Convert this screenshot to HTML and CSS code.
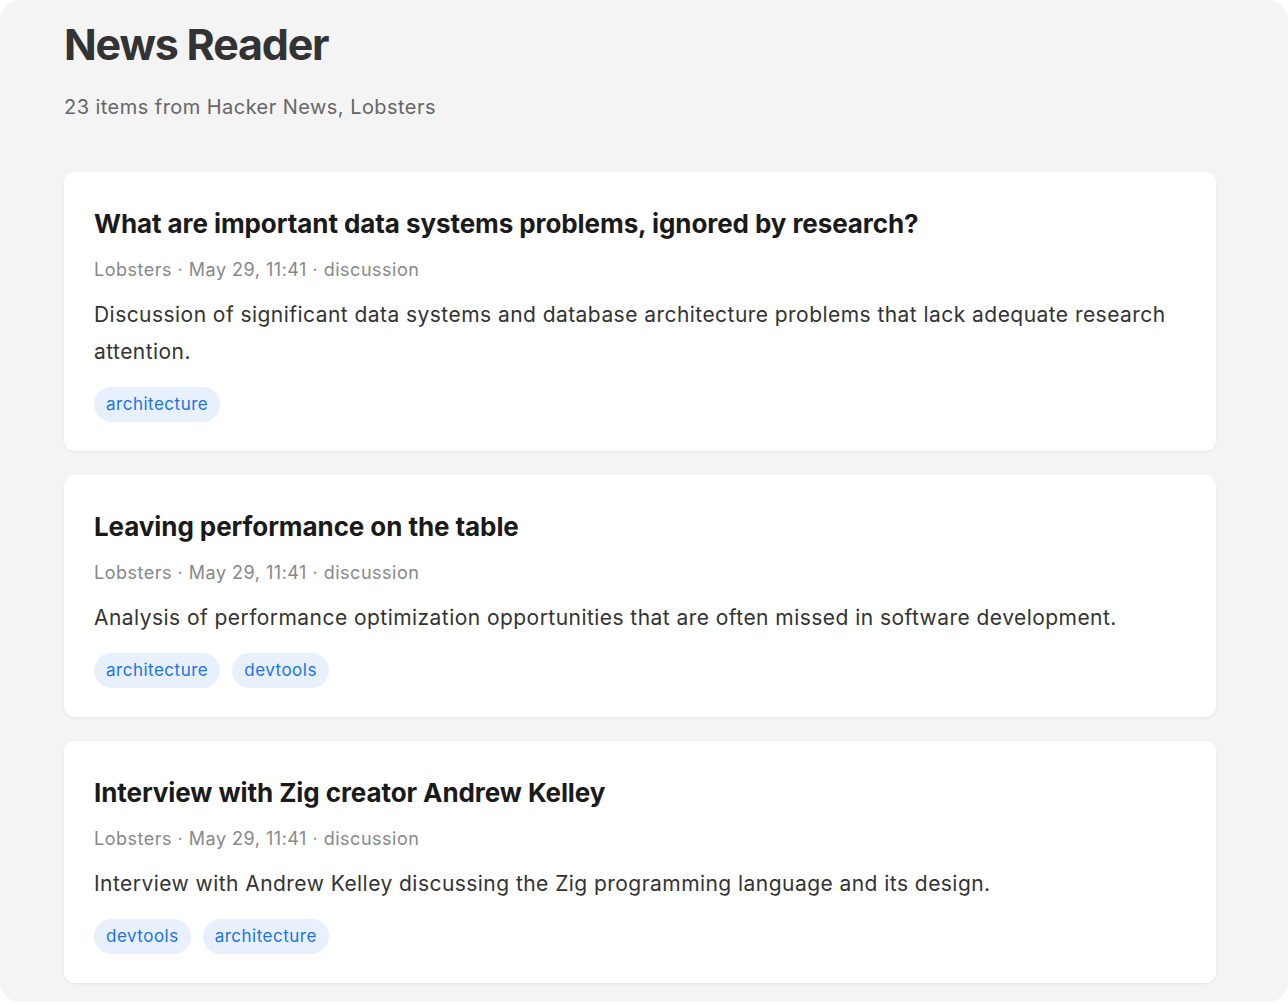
FILE: index.html
```html
<!DOCTYPE html>
<html lang="en">
<head>
<meta charset="utf-8">
<title>News Reader</title>
<link rel="stylesheet" href="styles.css">
</head>
<body>
<div class="window">
  <main class="reader">
    <header class="header">
      <h1 class="title">News Reader</h1>
      <p class="subtitle">23 items from Hacker News, Lobsters</p>
    </header>
    <section class="list">
      <article class="card">
        <h2 class="card-title">What are important data systems problems, ignored by research?</h2>
        <div class="meta">Lobsters · May 29, 11:41 · discussion</div>
        <p class="desc">Discussion of significant data systems and database architecture problems that lack adequate research attention.</p>
        <div class="tags"><span class="tag">architecture</span></div>
      </article>
      <article class="card">
        <h2 class="card-title">Leaving performance on the table</h2>
        <div class="meta">Lobsters · May 29, 11:41 · discussion</div>
        <p class="desc">Analysis of performance optimization opportunities that are often missed in software development.</p>
        <div class="tags"><span class="tag">architecture</span><span class="tag">devtools</span></div>
      </article>
      <article class="card">
        <h2 class="card-title">Interview with Zig creator Andrew Kelley</h2>
        <div class="meta">Lobsters · May 29, 11:41 · discussion</div>
        <p class="desc">Interview with Andrew Kelley discussing the Zig programming language and its design.</p>
        <div class="tags"><span class="tag">devtools</span><span class="tag">architecture</span></div>
      </article>
    </section>
  </main>
</div>
</body>
</html>
```

FILE: styles.css
```css
html, body {
  margin: 0;
  padding: 0;
  background: #ffffff;
}

body {
  font-family: Inter, "Noto Sans", "Liberation Sans", sans-serif;
  color: #333333;
}

.window {
  height: 1002px;
  background: #f4f4f4;
  border-radius: 20px;
  overflow: hidden;
}

.reader {
  width: 1152px;
  margin-left: 64px;
}

.header {
  padding-top: 18px;
}

.title {
  margin: 0;
  font-size: 43px;
  font-weight: 700;
  line-height: 53px;
  color: #333333;
  letter-spacing: -1.2px;
}

.subtitle {
  margin: 24px 0 0;
  font-size: 20px;
  line-height: 24px;
  color: #666666;
  letter-spacing: 0.45px;
}

.list {
  margin-top: 53px;
  display: flex;
  flex-direction: column;
  gap: 24px;
}

.card {
  background: #ffffff;
  border-radius: 10px;
  padding: 31px 30px 29px;
  box-shadow: 0 1px 3px rgba(0, 0, 0, 0.06);
}

.card-title {
  margin: 0;
  font-size: 26px;
  font-weight: 700;
  line-height: 41px;
  color: #1a1a1a;
  letter-spacing: -0.08px;
}

.meta {
  margin-top: 12px;
  font-size: 18px;
  line-height: 27px;
  color: #888888;
  letter-spacing: 0.5px;
}

.desc {
  margin: 14px 0 0;
  font-size: 21px;
  line-height: 36.75px;
  color: #333333;
  letter-spacing: 0.45px;
}

.tags {
  margin-top: 16.25px;
  display: flex;
  gap: 12px;
}

.tag {
  display: inline-flex;
  align-items: center;
  height: 35px;
  padding: 0 12px;
  border-radius: 18px;
  background: #e8f0fe;
  color: #1a73e8;
  font-size: 17px;
  letter-spacing: 0.5px;
}
```
